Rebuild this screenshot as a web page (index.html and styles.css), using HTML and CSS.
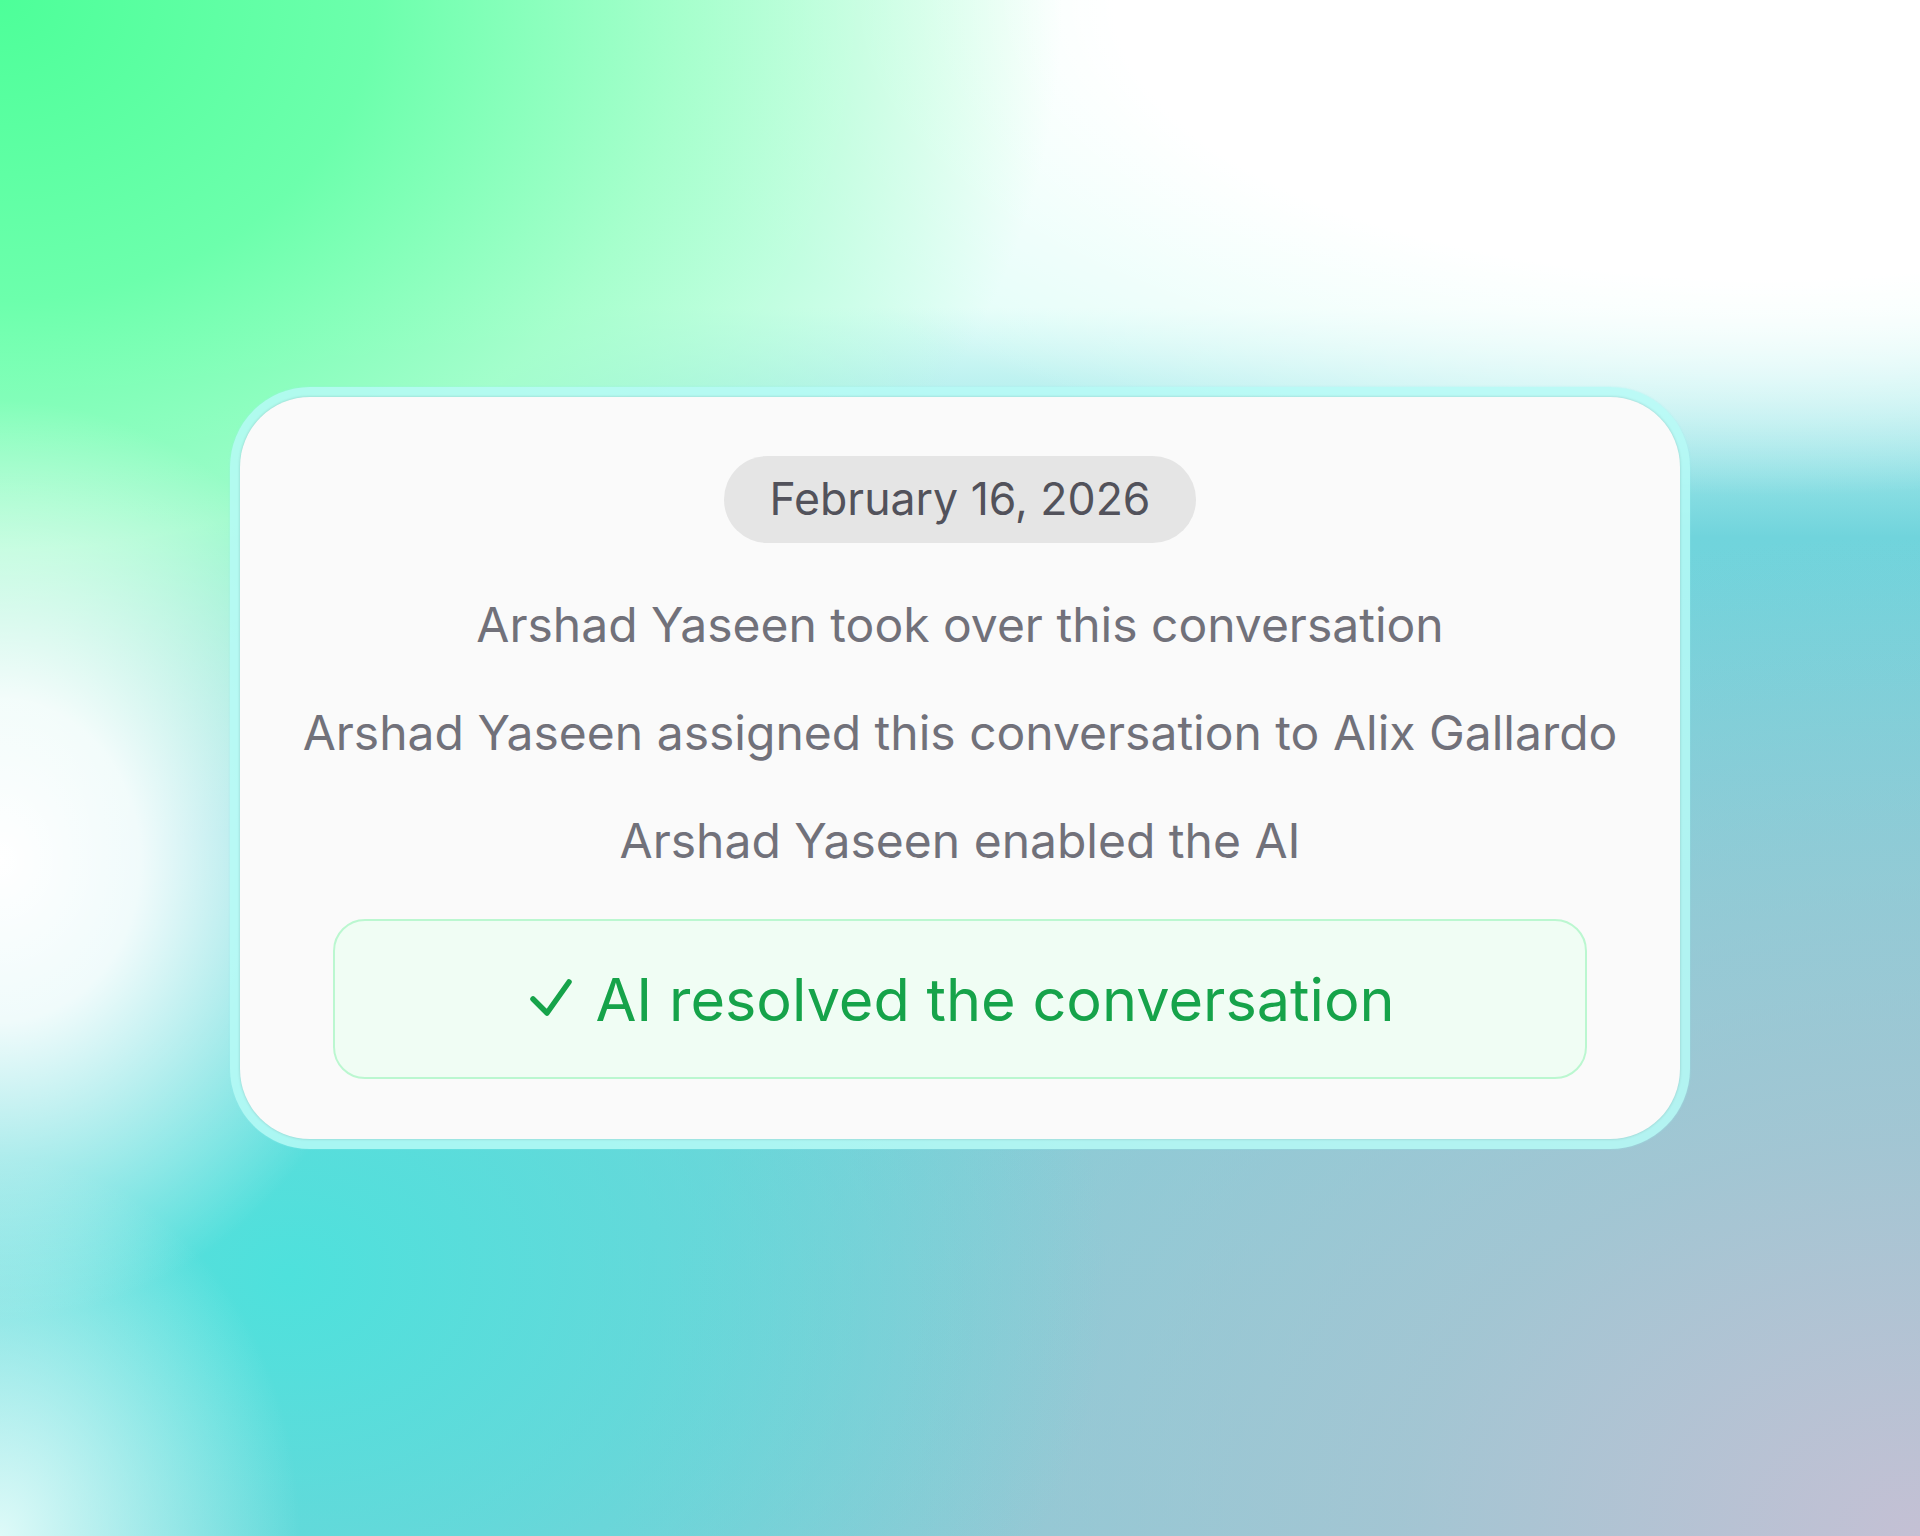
FILE: index.html
```html
<!DOCTYPE html>
<html lang="en">
<head>
<meta charset="utf-8">
<title>Conversation events</title>
<link rel="stylesheet" href="styles.css">
</head>
<body>
  <div class="ring">
    <div class="card">
      <div class="date-pill">February 16, 2026</div>
      <div class="events">
        <p class="event">Arshad Yaseen took over this conversation</p>
        <p class="event">Arshad Yaseen assigned this conversation to Alix Gallardo</p>
        <p class="event">Arshad Yaseen enabled the AI</p>
      </div>
      <div class="resolved">
        <svg class="check" width="44" height="40" viewBox="0 0 44 40" aria-hidden="true">
          <path d="M4 21 L18 35 L40 4" fill="none" stroke="#16a34a" stroke-width="5.5" stroke-linecap="round" stroke-linejoin="round"/>
        </svg>
        <span class="resolved-text">AI resolved the conversation</span>
      </div>
    </div>
  </div>
</body>
</html>
```
FILE: styles.css
```css
html, body {
  margin: 0;
  padding: 0;
}

body {
  width: 1920px;
  height: 1536px;
  overflow: hidden;
  display: flex;
  align-items: center;
  justify-content: center;
  font-family: Inter, "Noto Sans", "Liberation Sans", sans-serif;
  background:
    radial-gradient(ellipse 400px 460px at 0% 56%, #ffffff 0%, rgba(255,255,255,0.9) 35%, rgba(255,255,255,0) 100%),
    radial-gradient(ellipse 300px 380px at 0% 100%, rgba(228,252,250,0.95) 0%, rgba(228,252,250,0) 100%),
    radial-gradient(ellipse 1250px 1000px at 0% 0%, #4dff99 0%, #6cffac 30%, rgba(160,255,200,0.9) 55%, rgba(200,255,225,0) 85%),
    radial-gradient(ellipse 1450px 620px at 92% 0%, #ffffff 0%, #ffffff 45%, rgba(255,255,255,0) 80%),
    linear-gradient(180deg, rgba(225,254,248,1) 0%, rgba(225,254,248,1) 20%, rgba(210,250,246,0.7) 26%, rgba(200,245,245,0) 35%),
    radial-gradient(ellipse 820px 660px at 15% 83%, #4ee1dc 0%, rgba(78,225,220,0.6) 45%, rgba(78,225,220,0) 100%),
    radial-gradient(ellipse 1300px 1000px at 100% 100%, #c4c0d4 0%, rgba(170,196,210,0.8) 40%, rgba(150,200,212,0) 100%),
    linear-gradient(180deg, #6fd6dc 0%, #70d4dc 35%, #7ecfd8 60%, #86cbd6 100%);
}

.ring {
  width: 1440px;
  padding: 10px;
  border-radius: 80px;
  background: rgba(182, 250, 246, 0.85);
  box-shadow: 0 0 2px rgba(150, 240, 240, 0.6);
}

.card {
  background: #fafafa;
  border-radius: 70px;
  padding: 59px 93px 60px;
  display: flex;
  flex-direction: column;
  align-items: center;
  box-shadow: 0 0 3px rgba(0, 0, 0, 0.18);
}

.date-pill {
  background: #e5e5e5;
  color: #52525b;
  font-size: 44.6px;
  line-height: 54px;
  padding: 16px 45px 17px;
  border-radius: 999px;
  margin-bottom: 46px;
}

.events {
  display: flex;
  flex-direction: column;
  align-items: center;
  gap: 36px;
}

.event {
  margin: 0;
  color: #71717a;
  font-size: 48px;
  line-height: 72px;
  text-align: center;
  white-space: nowrap;
}

.resolved {
  margin-top: 42px;
  align-self: stretch;
  height: 156px;
  border: 2px solid #bbf7d0;
  background: #f0fdf4;
  border-radius: 32px;
  display: flex;
  align-items: center;
  justify-content: center;
  gap: 22px;
  padding-left: 4px;
  color: #16a34a;
}

.check {
  flex: none;
  margin-top: -2px;
}

.resolved-text {
  font-size: 59.4px;
  line-height: 72px;
}
```
